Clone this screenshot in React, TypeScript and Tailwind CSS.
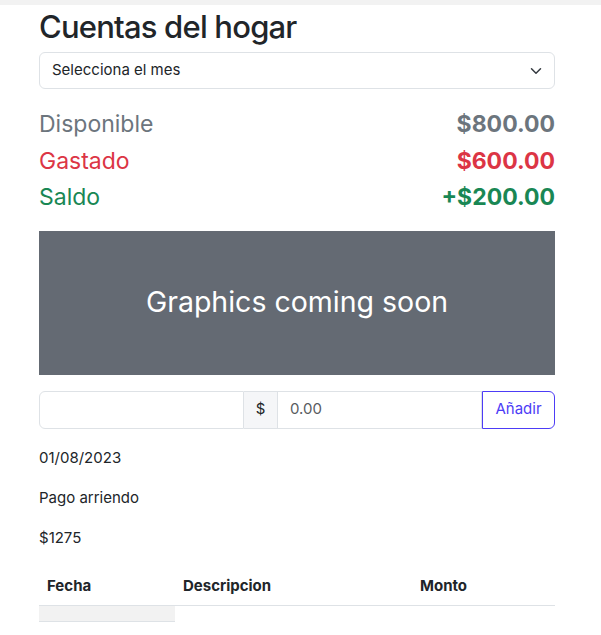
import { useState } from "react";

type Expense = { date: string; description: string; amount: number };

const expenses: Expense[] = [{ date: "01/08/2023", description: "Pago arriendo", amount: 1275 }];

export default function App() {
  const [description, setDescription] = useState("");
  const [amount, setAmount] = useState("");

  return (
    <div className="min-h-[635px] bg-white text-[#212529] font-['Inter','Liberation_Sans',sans-serif]">
      <div className="h-[5px] bg-[#f2f2f2]" />
      <div className="mx-[39px] w-[516px]">
        <h1 className="text-[31px] leading-[37px] font-medium mt-[3px] mb-[7px] tracking-[-0.8px]">Cuentas del hogar</h1>

        <div className="relative">
          <select className="w-full h-[37px] appearance-none rounded-[6px] border border-[#dee2e6] bg-white pl-[12px] pr-[36px] text-[15px] text-[#212529] outline-none">
            <option>Selecciona el mes</option>
          </select>
          <svg
            className="pointer-events-none absolute right-[13px] top-[13px]"
            width="12"
            height="12"
            viewBox="0 0 16 16"
            fill="none"
            stroke="#343a40"
            strokeWidth="2"
            strokeLinecap="round"
            strokeLinejoin="round"
          >
            <path d="m2 5 6 6 6-6" />
          </svg>
        </div>

        <div className="mt-[17px] text-[23px]">
          <div className="flex h-[36.5px] items-center justify-between text-[#6c757d]">
            <span>Disponible</span>
            <span className="font-bold">$800.00</span>
          </div>
          <div className="flex h-[36.5px] items-center justify-between text-[#dc3545]">
            <span>Gastado</span>
            <span className="font-bold">$600.00</span>
          </div>
          <div className="flex h-[36.5px] items-center justify-between text-[#198754]">
            <span>Saldo</span>
            <span className="font-bold">+$200.00</span>
          </div>
        </div>

        <div className="mt-[15px] flex h-[144px] items-center justify-center bg-[#646a73] text-white text-[28.5px]">
          Graphics coming soon
        </div>

        <div className="mt-[16px] flex h-[38px] text-[15px]">
          <input
            value={description}
            onChange={(e) => setDescription(e.target.value)}
            className="w-[205px] rounded-l-[6px] border border-[#dee2e6] px-[12px] outline-none"
          />
          <span className="flex w-[33px] items-center justify-center border-y border-[#dee2e6] bg-[#f5f6f8]">$</span>
          <input
            value={amount}
            onChange={(e) => setAmount(e.target.value)}
            placeholder="0.00"
            className="w-[205px] border border-[#dee2e6] px-[12px] outline-none placeholder:text-[#595c5f]"
          />
          <button className="w-[73px] rounded-r-[6px] border border-[#4d3cf6] text-[#4d3cf6]">Añadir</button>
        </div>

        {expenses.map((e) => (
          <div key={e.date} className="mt-[17px] text-[15px] leading-[24px]">
            <p className="mb-[16px]">{e.date}</p>
            <p className="mb-[16px]">{e.description}</p>
            <p className="mb-[15px]">${e.amount}</p>
          </div>
        ))}

        <table className="w-full text-[15px] leading-[24px] border-collapse">
          <thead>
            <tr className="border-b border-[#dee2e6]">
              <th className="w-[136px] px-[8px] pt-[9px] pb-[7px] text-left font-bold">Fecha</th>
              <th className="w-[237px] px-[8px] pt-[9px] pb-[7px] text-left font-bold">Descripcion</th>
              <th className="px-[8px] pt-[9px] pb-[7px] text-left font-bold">Monto</th>
            </tr>
          </thead>
          <tbody>
            <tr>
              <td className="h-[16px] bg-[#f2f2f2] border-b border-[#dee2e6]" />
            </tr>
          </tbody>
        </table>
      </div>
    </div>
  );
}
